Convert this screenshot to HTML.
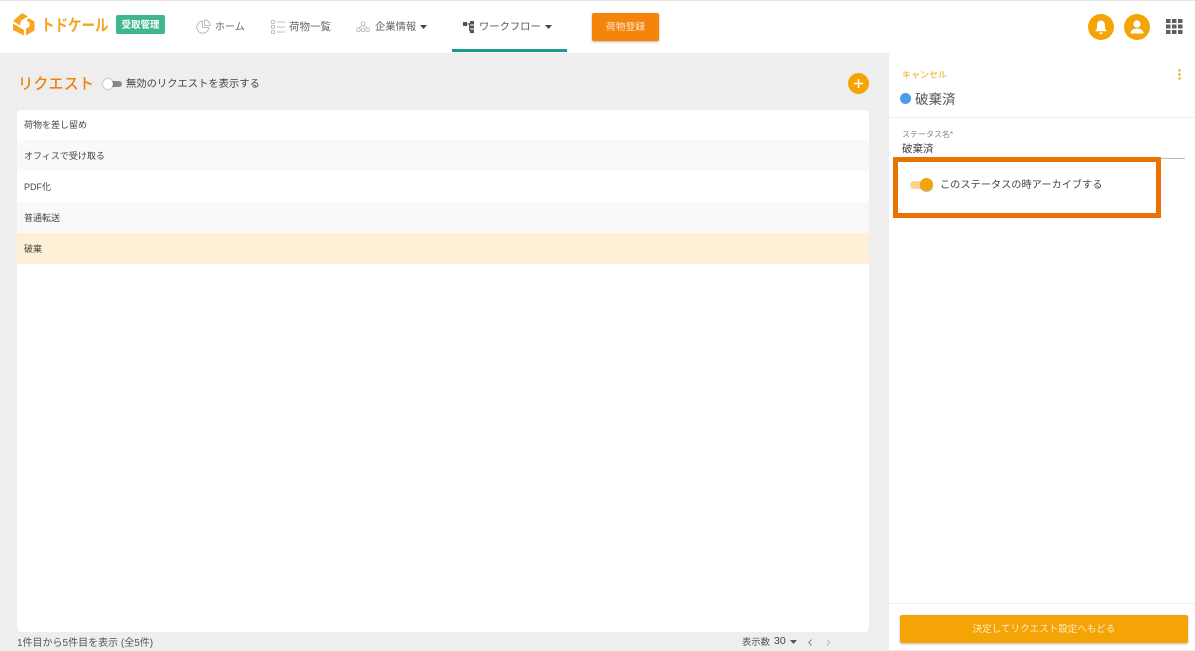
<!DOCTYPE html>
<html lang="ja"><head><meta charset="utf-8"><style>
html,body{margin:0;padding:0}
body{width:1195px;height:650px;position:relative;overflow:hidden;background:#eee;font-family:"Liberation Sans","Noto Sans CJK JP",sans-serif;color:#444}
.a{position:absolute;white-space:nowrap}
svg{position:absolute;overflow:visible}
.row{position:absolute;left:17px;width:852px;height:31px;line-height:32px;font-size:9px;text-indent:7px;color:#444}
</style></head><body>
<div class="a" style="left:0;top:0;width:1195px;height:53px;background:#fff;border-top:1px solid #e4e4e4;box-sizing:border-box"></div>

<svg style="left:13px;top:13px" width="22" height="23" viewBox="0 0 22 23"><path d="M9 0 L15 3.500 L8 7.500 L7 12.500 L0 8 Z M0 10.500 L11 17 L11 22.500 L0 17 Z M15.500 5 L21.500 8.500 L21.500 17.500 L13 22.500 L13 15.500 L16.500 13.500 L16.500 9.500 L13.500 7.500 Z" fill="#f5a623"/></svg>
<div class="a" style="left:41px;top:14px;font-size:13.500px;line-height:24px;font-weight:700;color:#f4a321;transform:scaleY(1.2);transform-origin:left center">トドケール</div>
<div class="a" style="left:116px;top:15px;width:49px;height:19px;background:#3fb68c;border-radius:2px;color:#fff;font-size:9.500px;font-weight:700;line-height:21px;text-align:center">受取管理</div>

<svg style="left:196px;top:19px" width="15" height="15" viewBox="0 0 15 15" fill="none" stroke="#aaa" stroke-width=".8"><path d="M6.500 2.200A6 6 0 1 0 12.800 8.500H6.500Z"/><path d="M8.500 .8A6 6 0 0 1 14.200 6.500H8.500Z"/></svg>
<div class="a" style="left:215px;top:20px;font-size:10px;line-height:16px;color:#666">ホーム</div>
<svg style="left:271px;top:20px" width="14" height="14" viewBox="0 0 14 14" fill="none" stroke="#aaa" stroke-width=".8"><rect x=".5" y=".5" width="3" height="3" rx="1"/><rect x=".5" y="5.500" width="3" height="3" rx="1"/><rect x=".5" y="10.500" width="3" height="3" rx="1"/><path d="M6 2h8M6 7h8M6 12h8"/></svg>
<div class="a" style="left:289px;top:19px;font-size:10.500px;line-height:16px;color:#666">荷物一覧</div>
<svg style="left:356px;top:21px" width="14" height="12" viewBox="0 0 15 12" fill="none" stroke="#aaa" stroke-width=".8"><circle cx="7.500" cy="2.500" r="2"/><circle cx="2.500" cy="9" r="2"/><circle cx="7.500" cy="9" r="2"/><circle cx="12.500" cy="9" r="2"/><path d="M6 4.500 3.500 7M9 4.500 11.500 7"/></svg>
<div class="a" style="left:375px;top:20px;font-size:10.300px;line-height:16px;color:#666">企業情報</div>
<svg style="left:420px;top:25px" width="7" height="4"><path d="M0 0h7L3.500 4Z" fill="#444"/></svg>

<svg style="left:463px;top:21px" width="11" height="12" viewBox="0 0 11 12" fill="#555"><rect x="0" y="1" width="4" height="4"/><rect x="7" y="0" width="4" height="3.500"/><rect x="7" y="4.500" width="4" height="3"/><rect x="7" y="8.500" width="4" height="3.500"/><path d="M4 2.500h3v1H4z"/><path d="M6 2h1v8H6z"/></svg>
<div class="a" style="left:479px;top:20px;font-size:10.300px;line-height:16px;color:#555">ワークフロー</div>
<svg style="left:545px;top:25px" width="7" height="4"><path d="M0 0h7L3.500 4Z" fill="#444"/></svg>
<div class="a" style="left:452px;top:49px;width:114.500px;height:3px;background:#179c8e"></div>

<div class="a" style="left:592px;top:13px;width:67px;height:28px;background:#f5840c;border-radius:2px;box-shadow:0 1px 2px rgba(0,0,0,.3);color:#fde6cc;font-size:9.800px;line-height:30px;text-align:center">荷物登録</div>

<div class="a" style="left:1088px;top:14px;width:26px;height:26px;border-radius:50%;background:#f4a505"></div>
<svg style="left:1088px;top:14px" width="26" height="26" viewBox="0 0 26 26" fill="#fff"><path d="M13 6.500c-2.600 0-4 2-4 4.500v3.500l-1.500 2v.8h11v-.8l-1.500-2v-3.500c0-2.500-1.400-4.500-4-4.500Z"/><path d="M11.300 18.500h3.400a1.700 1.700 0 0 1-3.400 0Z"/></svg>
<div class="a" style="left:1124px;top:14px;width:26px;height:26px;border-radius:50%;background:#f4a505"></div>
<svg style="left:1124px;top:14px" width="26" height="26" viewBox="0 0 26 26" fill="#fff"><circle cx="13" cy="10" r="3.600"/><path d="M6.500 19c0-3 3.500-4.500 6.500-4.500s6.500 1.500 6.500 4.500v.5h-13Z"/></svg>
<svg style="left:1166px;top:19px" width="17" height="15" fill="#5f5f5f"><rect x="0" y="0" width="4.500" height="4"/><rect x="6" y="0" width="4.500" height="4"/><rect x="12" y="0" width="4.500" height="4"/><rect x="0" y="5.500" width="4.500" height="4"/><rect x="6" y="5.500" width="4.500" height="4"/><rect x="12" y="5.500" width="4.500" height="4"/><rect x="0" y="11" width="4.500" height="4"/><rect x="6" y="11" width="4.500" height="4"/><rect x="12" y="11" width="4.500" height="4"/></svg>

<div class="a" style="left:18px;top:74px;font-size:15.200px;line-height:22px;font-weight:500;color:#ee8413">リクエスト</div>
<div class="a" style="left:109px;top:81px;width:13px;height:6px;border-radius:3px;background:#8a8a8a"></div>
<div class="a" style="left:103px;top:79px;width:10px;height:10px;border-radius:50%;background:#fff;box-shadow:0 0 2px rgba(0,0,0,.4)"></div>
<div class="a" style="left:126px;top:77px;font-size:10.300px;line-height:15px;color:#444">無効のリクエストを表示する</div>
<div class="a" style="left:848px;top:73px;width:21px;height:21px;border-radius:50%;background:#f4a505"></div>
<svg style="left:848px;top:73px" width="21" height="21"><path d="M6 10.500h9M10.500 6v9" stroke="#fff" stroke-width="1.500"/></svg>

<div class="a" style="left:17px;top:110px;width:852px;height:522px;background:#fff;border-radius:4px"></div>
<div class="row" style="top:109px">荷物を差し留め</div>
<div class="row" style="top:140px;background:#f9f9f9">オフィスで受け取る</div>
<div class="row" style="top:171px">PDF化</div>
<div class="row" style="top:202px;background:#f9f9f9">普通転送</div>
<div class="row" style="top:233px;background:#fdf0d6">破棄</div>

<div class="a" style="left:17px;top:636px;font-size:10px;line-height:15px;color:#555">1件目から5件目を表示 (全5件)</div>
<div class="a" style="left:742px;top:635px;font-size:9.300px;line-height:15px;color:#555">表示数</div>
<div class="a" style="left:774px;top:634px;font-size:10.500px;line-height:15px;color:#444">30</div>
<svg style="left:790px;top:640px" width="7" height="4"><path d="M0 0h7L3.500 4Z" fill="#555"/></svg>
<svg style="left:808px;top:639px" width="5" height="7" fill="none" stroke="#666" stroke-width=".8"><path d="M3.500 .5 .8 3.500l2.700 3"/></svg>
<svg style="left:826px;top:639px" width="5" height="7" fill="none" stroke="#aaa" stroke-width=".8"><path d="M1 .5l2.700 3-2.700 3"/></svg>

<div class="a" style="left:889px;top:53px;width:306px;height:597px;background:#fff"></div>
<div class="a" style="left:902px;top:68px;font-size:9px;line-height:14px;color:#f4a80f">キャンセル</div>
<svg style="left:1178px;top:69px" width="3" height="11" fill="#ee9a0a"><circle cx="1.500" cy="1.500" r="1.200"/><circle cx="1.500" cy="5.500" r="1.200"/><circle cx="1.500" cy="9.500" r="1.200"/></svg>
<div class="a" style="left:900px;top:93px;width:11px;height:11px;border-radius:50%;background:#4a9ce8"></div>
<div class="a" style="left:915px;top:91px;font-size:13.500px;line-height:18px;color:#555">破棄済</div>
<div class="a" style="left:889px;top:117px;width:306px;height:1px;background:#eee"></div>
<div class="a" style="left:902px;top:129px;font-size:8px;line-height:12px;color:#888">ステータス名*</div>
<div class="a" style="left:902px;top:142px;font-size:10.500px;line-height:15px;color:#444">破棄済</div>
<div class="a" style="left:902px;top:158px;width:283px;height:1px;background:#bbb"></div>

<div class="a" style="left:910px;top:181px;width:20px;height:8px;border-radius:4px;background:#f9d491"></div>
<div class="a" style="left:920px;top:178px;width:13px;height:13px;border-radius:50%;background:#f4a505;box-shadow:0 1px 1px rgba(0,0,0,.3)"></div>
<div class="a" style="left:940px;top:178px;font-size:10.200px;line-height:15px;color:#444">このステータスの時アーカイブする</div>

<div class="a" style="left:893px;top:157px;width:268px;height:61px;box-sizing:border-box;border:5px solid #ea7204"></div>

<div class="a" style="left:889px;top:603px;width:306px;height:1px;background:#eee"></div>
<div class="a" style="left:900px;top:615px;width:288px;height:28px;background:#f4a505;border-radius:2px;box-shadow:0 1px 2px rgba(0,0,0,.3);color:#fdeccb;font-size:9.550px;line-height:30px;text-align:center">決定してリクエスト設定へもどる</div>
</body></html>
